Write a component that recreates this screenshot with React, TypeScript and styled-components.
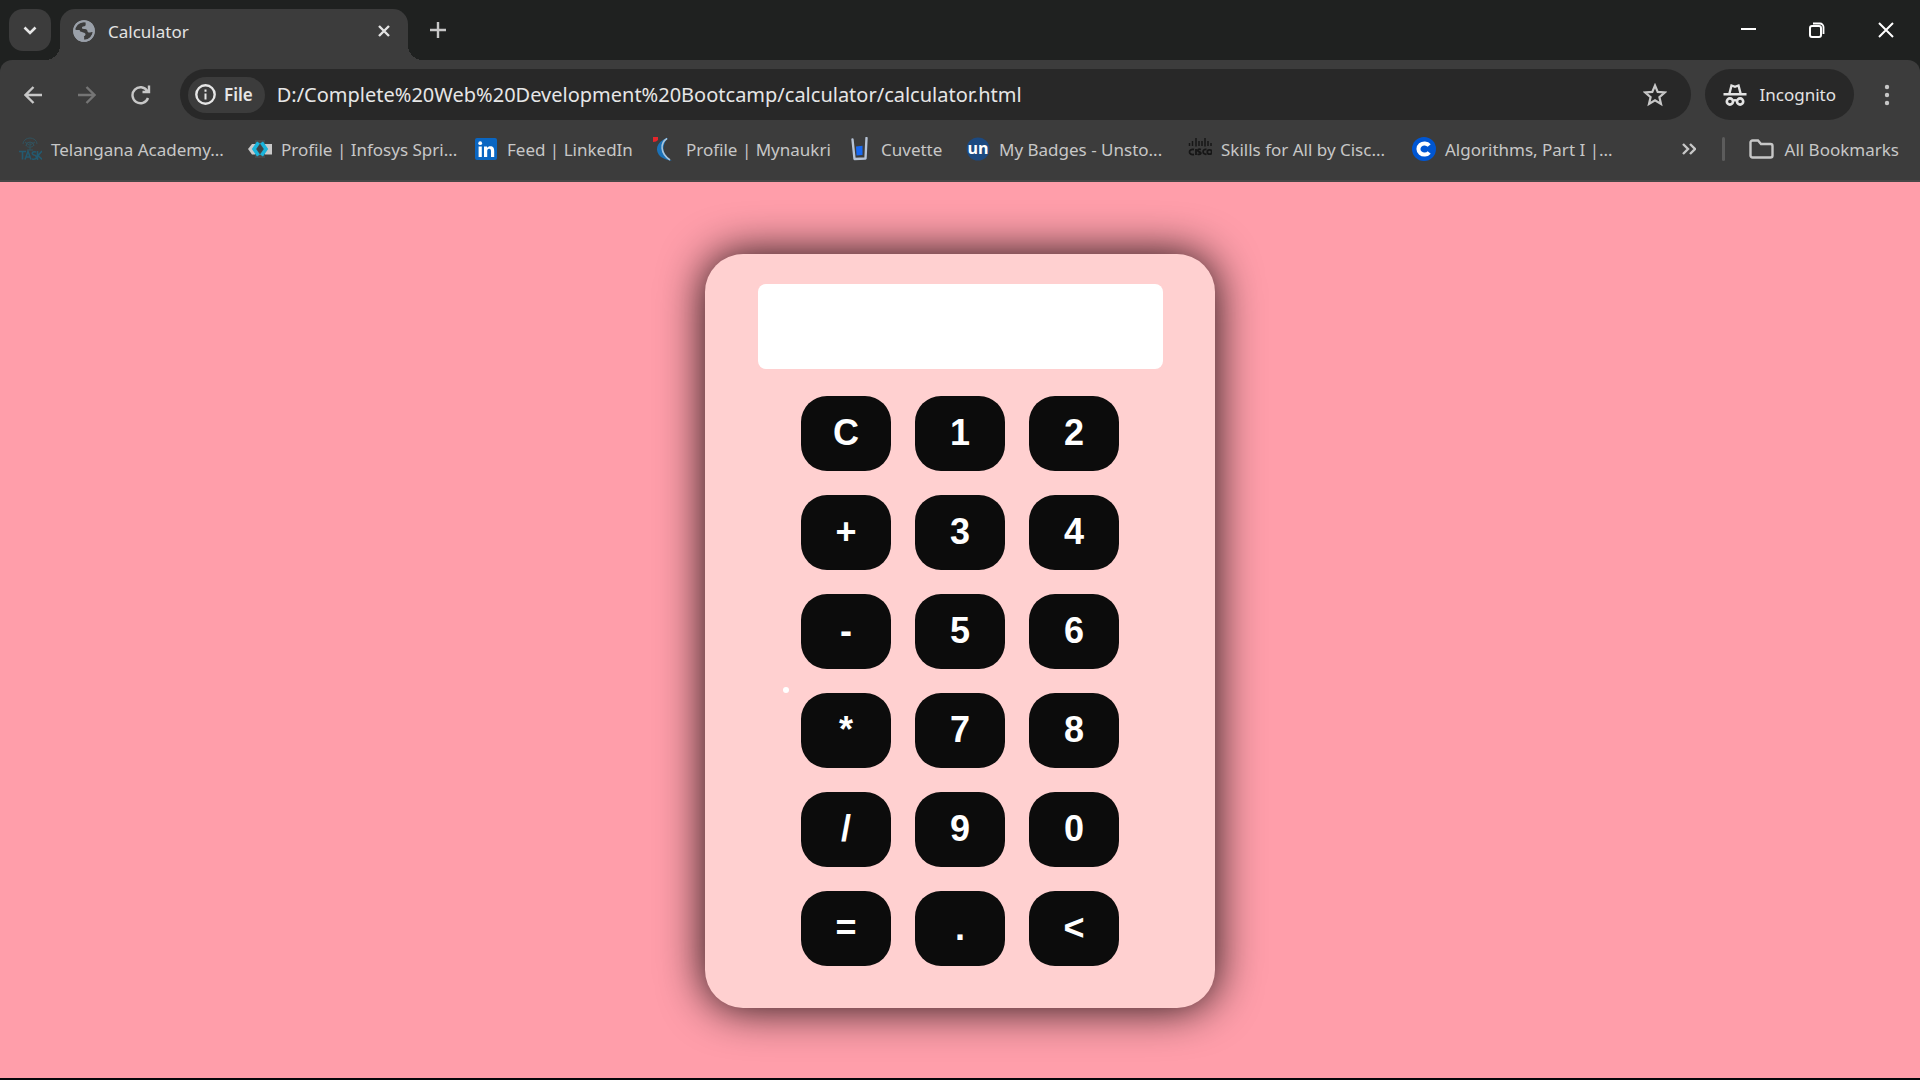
import React, { useState } from 'react';
import styled, { createGlobalStyle } from 'styled-components';

const GlobalStyle = createGlobalStyle`
  *, *::before, *::after { box-sizing: border-box; }
  html, body, #root { height: 100%; }
  body {
    margin: 0;
    background: #ff9eaa;
    font-family: "Noto Sans", "Open Sans", sans-serif;
    overflow: hidden;
  }
  button, input { font: inherit; border: 0; padding: 0; outline: none; }
`;

const Window = styled.div`
  display: flex;
  flex-direction: column;
  min-height: 100vh;
  border-bottom: 2px solid #05060a;
`;

const TabStrip = styled.header`
  display: flex;
  align-items: flex-start;
  height: 60px;
  padding: 9px 0 0 9px;
  background: #1f2120;
`;

const IconButton = styled.button<{ $size?: number; $color?: string }>`
  display: flex;
  flex: none;
  align-items: center;
  justify-content: center;
  width: ${(p) => p.$size ?? 42}px;
  height: ${(p) => p.$size ?? 42}px;
  background: transparent;
  color: ${(p) => p.$color ?? '#c7c7c7'};
`;

const TabSearch = styled(IconButton)`
  border-radius: 14px;
  background: #3c3c3c;
  color: #e6e6e6;
`;

const Tab = styled.div`
  position: relative;
  display: flex;
  align-items: center;
  gap: 12px;
  width: 348px;
  height: 51px;
  margin-left: 9px;
  padding: 0 12px 8px 12px;
  border-radius: 15px 15px 0 0;
  background: #3c3c3c;
  color: #e3e3e3;
  font-size: 17px;

  &::before, &::after {
    content: '';
    position: absolute;
    bottom: 0;
    width: 15px;
    height: 15px;
  }
  &::before { right: 100%; background: radial-gradient(circle at 0 0, transparent 15px, #3c3c3c 15px); }
  &::after { left: 100%; background: radial-gradient(circle at 100% 0, transparent 15px, #3c3c3c 15px); }
`;

const TabTitle = styled.span`
  flex: 1;
  padding-top: 2px;
`;

const NewTab = styled(IconButton)`
  margin-left: 9px;
`;

const WindowControls = styled.div`
  display: flex;
  gap: 27px;
  margin: 0 13px 0 auto;
`;

const Chrome = styled.div`
  background: #1f2120;
`;

const ToolbarArea = styled.div`
  border-bottom: 2px solid #474747;
  border-radius: 12px 12px 0 0;
  background: #3c3c3c;
`;

const Toolbar = styled.nav`
  display: flex;
  align-items: center;
  height: 69px;
  padding: 0 12px;
`;

const NavButtons = styled.div`
  display: flex;
  gap: 12px;
  margin-right: 18px;
`;

const Omnibox = styled.div`
  display: flex;
  flex: 1;
  align-items: center;
  height: 51px;
  padding: 0 15px 0 8px;
  border-radius: 26px;
  background: #282828;
`;

const FileChip = styled.button`
  display: flex;
  align-items: center;
  gap: 8px;
  height: 36px;
  padding: 0 12px 0 7px;
  border-radius: 18px;
  background: #3c3c3c;
  color: #e6e6e6;
  font-size: 17px;
  font-weight: 600;
`;

const Address = styled.input`
  flex: 1;
  min-width: 0;
  margin-left: 12px;
  background: transparent;
  color: #e6e6e6;
  font-size: 20px;
`;

const Incognito = styled.button`
  display: flex;
  align-items: center;
  gap: 13px;
  height: 51px;
  margin: 0 12px 0 14px;
  padding: 0 18px;
  border-radius: 26px;
  background: #282828;
  color: #e3e3e3;
  font-size: 17px;
`;

const BookmarkBar = styled.nav`
  display: flex;
  align-items: center;
  height: 51px;
  padding: 0 21px 11px 18px;
  color: #c7c7c7;
  font-size: 17px;
`;

const BookmarkList = styled.ul`
  display: grid;
  grid-template-columns: 230px 226px 179px 195px 118px 222px 224px auto;
  margin: 0;
  padding: 0;
  list-style: none;
`;

const Bookmark = styled.a<{ $gap?: number }>`
  display: flex;
  align-items: center;
  gap: ${(p) => p.$gap ?? 9}px;
  color: inherit;
  text-decoration: none;
  white-space: nowrap;
  svg { flex: none; }
`;

const Overflow = styled(IconButton)`
  margin-left: auto;
`;

const Divider = styled.span`
  width: 3px;
  height: 24px;
  margin: 0 24px 0 12px;
  border-radius: 2px;
  background: #5c5c5c;
`;

const Page = styled.main`
  display: flex;
  flex: 1;
  align-items: flex-start;
  justify-content: center;
  padding-top: 72px;
  background: #ff9eaa;
`;

const Calculator = styled.form`
  position: relative;
  display: flex;
  flex-direction: column;
  align-items: center;
  gap: 27px;
  width: 510px;
  padding: 30px 0 42px;
  border-radius: 38px;
  background: #ffd0d0;
  box-shadow: 0 0 45px rgba(0, 0, 0, 0.92);
`;

const Display = styled.input`
  width: 405px;
  height: 85px;
  padding: 0 16px;
  border-radius: 8px;
  background: #fff;
  color: #0b0b0b;
  font: bold 36px "Liberation Sans", Arial, sans-serif;
  text-align: right;
`;

const Keys = styled.div`
  display: grid;
  grid-template-columns: repeat(3, 90px);
  grid-auto-rows: 75px;
  gap: 24px;
`;

const Key = styled.button`
  padding-bottom: 2px;
  border-radius: 26px;
  background: #0c0c0c;
  color: #fff;
  font: bold 36px "Liberation Sans", Arial, sans-serif;
`;

const Speck = styled.span`
  position: absolute;
  top: 433px;
  left: 78px;
  width: 6px;
  height: 6px;
  border-radius: 50%;
  background: #fff;
`;

const Svg = ({ w = 24, h = w, children }: { w?: number; h?: number; children: React.ReactNode }) => (
  <svg width={w} height={h} viewBox={`0 0 ${w} ${h}`} fill="none" stroke="currentColor" strokeWidth="2.4" aria-hidden="true">
    {children}
  </svg>
);

const TaskLogo = () => (
  <Svg>
    <g stroke="#31525e" strokeWidth="1">
      <path d="M5 7a7 6 0 0 1 14 0M8 9a4 4 0 0 1 8 0M7 5l4 3M17 5l-5 3M12 5v8M8 8c1 3 6 3 8 0M9 13h6" />
    </g>
    <g stroke="#235a70" strokeWidth="1.6">
      <path d="M1 14.500h7M4.500 14.500v8M7 22.500l3-8 3 8M8 20h4M18 15c-4-1-5 2-2 3 4 1 3 5-2 4M19.500 14v9M24 14l-4 4.500 4 4" />
    </g>
  </Svg>
);

const InfosysLogo = () => (
  <Svg>
    <path d="M0 12l4-5h20v10.500H4z" fill="#c9c9c9" stroke="none" />
    <path d="M7 3h10v18H7z" fill="#464a4b" stroke="none" />
    <path d="M5 7h3v10H5z" fill="#c9c9c9" stroke="none" />
    <path d="M12 8l-3 4 3 4 3-4z" fill="#3c4446" stroke="none" />
    <path d="M10.500 5.500L6 12l4.500 6.500" stroke="#19b4dc" strokeWidth="3.600" />
    <path d="M13.500 5.500L18 12l-4.500 6.500" stroke="#19b4dc" strokeWidth="3.600" />
  </Svg>
);

const LinkedInLogo = () => (
  <Svg>
    <rect x="1" y="1" width="22" height="22" rx="2" fill="#0a66c2" stroke="none" />
    <g fill="#fff" stroke="none">
      <circle cx="6.200" cy="6.200" r="1.900" />
      <path d="M4.600 9.500h3.200V20H4.600zM10 9.500h3V11c.7-1.200 1.900-1.800 3.300-1.800 3 0 3.900 1.900 3.900 4.800v6H17v-5.500c0-1.600-.4-2.700-1.800-2.700-1.500 0-2 1.100-2 2.700V20H10z" />
    </g>
  </Svg>
);

const MynaukriLogo = () => (
  <Svg>
    <path d="M14 1C3 5 1 14 8 20c3 2 7 3 11 4-7-4-10-10-8-16 .6-3 2-5 4-7z" fill="#1b72b8" stroke="none" />
    <path d="M14 1.500C7 6 7 16 17 23" stroke="#a9c6de" strokeWidth="1.600" />
    <path d="M0 0h5v3L3 4.500 0 5z" fill="#e5262b" stroke="none" />
  </Svg>
);

const CuvetteLogo = () => (
  <Svg>
    <path d="M4.500 2.500l2 19.500 11-.5L18.500 1" stroke="#b6c3d6" strokeWidth="2.400" strokeLinejoin="round" strokeLinecap="round" />
    <path d="M8 9.500l6.500-.8V18l-6 .6z" fill="#1668f2" stroke="none" />
  </Svg>
);

const UnstopLogo = () => (
  <Svg>
    <circle cx="12" cy="12" r="11.500" fill="#1c4980" stroke="none" />
    <text x="12" y="17" textAnchor="middle" fill="#fff" stroke="none" fontFamily="Open Sans, sans-serif" fontWeight="700" fontSize="16">un</text>
  </Svg>
);

const CiscoLogo = () => (
  <Svg>
    <path d="M1.500 6v3M4.500 4v5M8 1v8.500M11 4v5M14 4v5M17 1v8.500M20 4v5M23 6v3" stroke="#161616" strokeWidth="1.500" />
    <g stroke="#161616" strokeWidth="1.800">
      <path d="M6 12.500c-6-1-6 6 0 5M8 12v6M13 12.500c-4-1-4 2-1.500 2.500 2.500.5 1.500 3-2 2.200M18.500 12.500c-4.500-1-4.500 5.500 0 4.700" />
      <circle cx="21.500" cy="15" r="2.200" />
    </g>
  </Svg>
);

const CourseraLogo = () => (
  <Svg>
    <circle cx="12" cy="12" r="12" fill="#0056d2" stroke="none" />
    <path d="M17.200 8.600a6 5.600 0 1 0 0 6.800" stroke="#fff" strokeWidth="4" />
  </Svg>
);

const bookmarks = [
  { label: 'Telangana Academy...', Logo: TaskLogo },
  { label: 'Profile | Infosys Spri...', Logo: InfosysLogo },
  { label: 'Feed | LinkedIn', Logo: LinkedInLogo },
  { label: 'Profile | Mynaukri', Logo: MynaukriLogo },
  { label: 'Cuvette', Logo: CuvetteLogo },
  { label: 'My Badges - Unsto...', Logo: UnstopLogo },
  { label: 'Skills for All by Cisc...', Logo: CiscoLogo },
  { label: 'Algorithms, Part I |...', Logo: CourseraLogo },
];

const keys = ['C', '1', '2', '+', '3', '4', '-', '5', '6', '*', '7', '8', '/', '9', '0', '=', '.', '<'];

const evaluate = (expression: string) => {
  const terms = expression.match(/\d*\.?\d+|[-+*/]/g) ?? [];
  const values: number[] = [];
  let operator = '+';
  terms.forEach((term) => {
    if (/^[-+*/]$/.test(term)) {
      operator = term;
      return;
    }
    const n = Number(term);
    if (operator === '*') values.push((values.pop() ?? 0) * n);
    else if (operator === '/') values.push((values.pop() ?? 0) / n);
    else values.push(operator === '-' ? -n : n);
  });
  return String(values.reduce((sum, n) => sum + n, 0));
};

export default function App() {
  const [entry, setEntry] = useState('');

  const press = (key: string) => {
    if (key === 'C') setEntry('');
    else if (key === '<') setEntry(entry.slice(0, -1));
    else if (key === '=') setEntry(evaluate(entry));
    else setEntry(entry + key);
  };

  return (
    <Window>
      <GlobalStyle />
      <TabStrip>
        <TabSearch aria-label="Search tabs">
          <Svg w={14}><path d="M1.500 4.500L7 10l5.500-5.500" strokeWidth="2.600" /></Svg>
        </TabSearch>
        <Tab>
          <Svg w={24}>
            <circle cx="12" cy="12" r="10.800" fill="#9aa0a9" stroke="none" />
            <path d="M14 3c-1 2 .5 3-1 4-1.500.8-3 0-3 2 0 1.500 3 .5 4.500 1.500 1.500 1 .5 2.500 2 3 1.500.4 2.500-.5 4.500-.5-.5 4-4 8-8.500 8-1-1.500.5-2.500-1-4-1.500-1.200-3.500-.5-4-2.500-.3-1.500 1-2 .5-3-1-1-3 0-5-1C3 6 8 2 14 3z" fill="#3c3c3c" stroke="none" />
            <path d="M3 12c3 .5 5-.5 7 1 1.500 1 3 .5 3.500 2 .4 1.500-1.500 2-2 3v3.500C6 21 3 17 3 12z" fill="#9aa0a9" stroke="none" />
            <circle cx="12" cy="12" r="9.800" stroke="#9aa0a9" strokeWidth="2" />
          </Svg>
          <TabTitle>Calculator</TabTitle>
          <IconButton $size={24} $color="#e3e3e3" aria-label="Close tab">
            <Svg w={12}><path d="M1 1l10 10M11 1L1 11" /></Svg>
          </IconButton>
        </Tab>
        <NewTab aria-label="New tab">
          <Svg w={16}><path d="M8 0v16M0 8h16" /></Svg>
        </NewTab>
        <WindowControls>
          <IconButton $color="#fff" aria-label="Minimize"><Svg w={16}><path d="M1 7h15" strokeWidth="2" /></Svg></IconButton>
          <IconButton $color="#fff" aria-label="Restore">
            <Svg w={16}>
              <rect x="1" y="4" width="11" height="11" rx="2" strokeWidth="2" />
              <path d="M4 1.500h7a3.500 3.500 0 0 1 3.500 3.500v7" strokeWidth="1.800" />
            </Svg>
          </IconButton>
          <IconButton $color="#fff" aria-label="Close window"><Svg w={16}><path d="M1 1l14 14M15 1L1 15" strokeWidth="2" /></Svg></IconButton>
        </WindowControls>
      </TabStrip>

      <Chrome>
        <ToolbarArea>
          <Toolbar>
            <NavButtons>
              <IconButton aria-label="Back"><Svg w={18}><path d="M18 9H1.500M9.500 1L1.500 9l8 8" /></Svg></IconButton>
              <IconButton $color="#757575" aria-label="Forward"><Svg w={18}><path d="M0 9h16.500M8.500 1l8 8-8 8" /></Svg></IconButton>
              <IconButton aria-label="Reload">
                <Svg w={20}><path d="M17 13a8 8 0 1 1-.8-7.200M18 0.500v6.500H11.500" /></Svg>
              </IconButton>
            </NavButtons>
            <Omnibox>
              <FileChip>
                <Svg w={21}><circle cx="10.500" cy="10.500" r="9.200" /><path d="M10.500 9.500v6M10.500 5.500v2.200" strokeWidth="2" /></Svg>
                File
              </FileChip>
              <Address aria-label="Address" defaultValue="D:/Complete%20Web%20Development%20Bootcamp/calculator/calculator.html" />
              <IconButton aria-label="Bookmark this tab">
                <Svg w={24}><path d="M12 2.500l2.700 6.400 7 .6-5.300 4.600 1.600 6.800-6-3.600-6 3.600 1.600-6.800L2.300 9.500l7-.6z" strokeWidth="2.200" /></Svg>
              </IconButton>
            </Omnibox>
            <Incognito>
              <Svg w={24}>
                <path d="M0.500 11.200h23M6.300 11L8.500 2.500l3.500 1.300 3.500-1.300L17.700 11" strokeWidth="2.400" />
                <circle cx="6.900" cy="18.500" r="3.100" strokeWidth="2.600" />
                <circle cx="17.100" cy="18.500" r="3.100" strokeWidth="2.600" />
                <path d="M10 18c1-1 3-1 4 0" />
              </Svg>
              Incognito
            </Incognito>
            <IconButton aria-label="Menu">
              <Svg w={6} h={22}><g fill="currentColor" stroke="none"><circle cx="3" cy="3" r="2.200" /><circle cx="3" cy="11" r="2.200" /><circle cx="3" cy="19" r="2.200" /></g></Svg>
            </IconButton>
          </Toolbar>
          <BookmarkBar>
            <BookmarkList>
              {bookmarks.map(({ label, Logo }) => (
                <li key={label}><Bookmark href="#"><Logo />{label}</Bookmark></li>
              ))}
            </BookmarkList>
            <Overflow aria-label="More bookmarks">
              <Svg w={14} h={12}><path d="M1 1l5 5-5 5M8 1l5 5-5 5" /></Svg>
            </Overflow>
            <Divider />
            <Bookmark href="#" $gap={11}>
              <Svg w={25} h={20}><path d="M1.500 16V3.500a2 2 0 0 1 2-2h5.500L12 5h9.500a2 2 0 0 1 2 2v9.500a2 2 0 0 1-2 2h-18a2 2 0 0 1-2-2z" /></Svg>
              All Bookmarks
            </Bookmark>
          </BookmarkBar>
        </ToolbarArea>
      </Chrome>

      <Page>
        <Calculator onSubmit={(e) => e.preventDefault()}>
          <Display aria-label="Result" value={entry} readOnly />
          <Keys>
            {keys.map((key) => <Key key={key} type="button" onClick={() => press(key)}>{key}</Key>)}
          </Keys>
          <Speck />
        </Calculator>
      </Page>
    </Window>
  );
}
